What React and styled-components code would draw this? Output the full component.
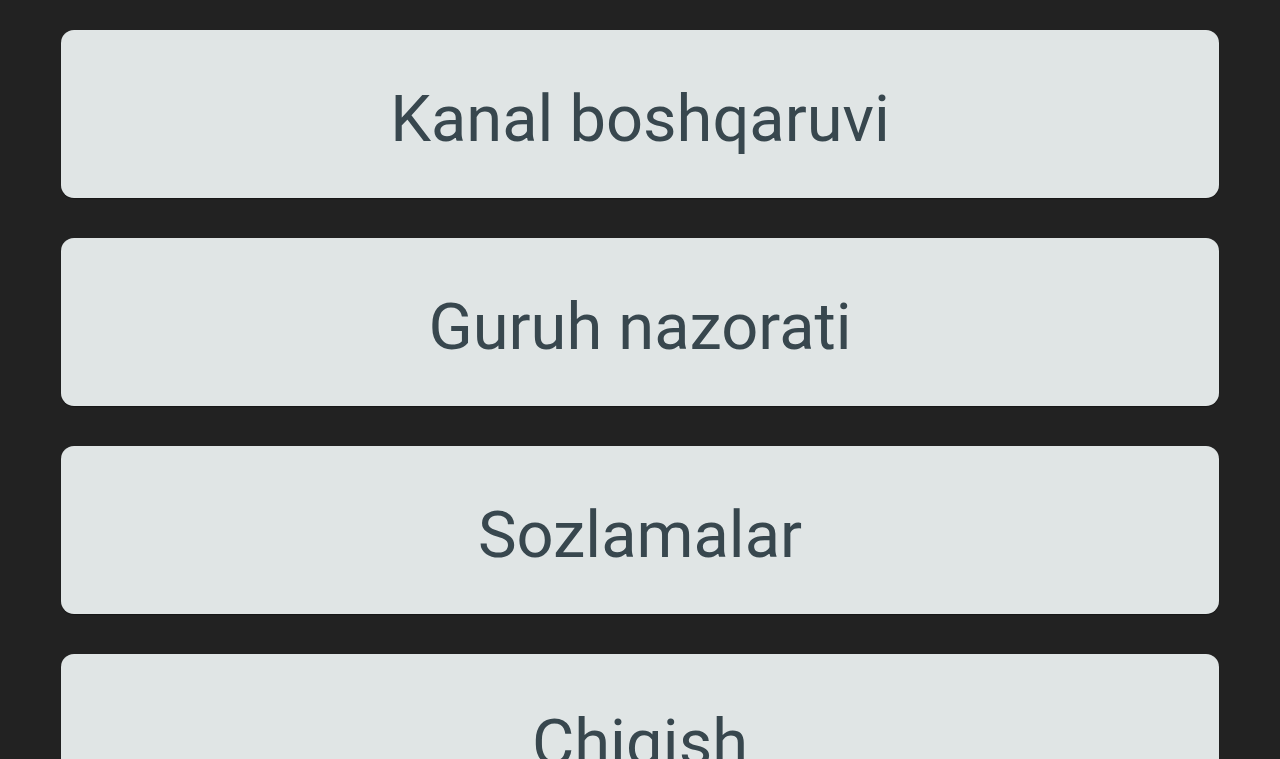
import React from "react";
import styled, { createGlobalStyle } from "styled-components";

const GlobalStyle = createGlobalStyle`
  html, body {
    margin: 0;
    padding: 0;
    background: #222222;
    overflow: hidden;
  }
`;

const Screen = styled.div`
  height: 759px;
  overflow: hidden;
  background: #222222;
  padding: 30px 61px 0;
  box-sizing: border-box;
  display: flex;
  flex-direction: column;
  gap: 40px;
`;

const MenuButton = styled.button`
  flex: 0 0 168px;
  width: 100%;
  border: none;
  border-radius: 13px;
  background: #e0e5e5;
  box-shadow: 0 1px 1px rgba(0, 0, 0, 0.35);
  color: #38474e;
  font-family: Roboto, "Noto Sans", sans-serif;
  font-size: 65px;
  font-weight: 400;
  display: flex;
  align-items: center;
  justify-content: center;
  padding: 10px 0 0;
  cursor: pointer;
`;

const items = ["Kanal boshqaruvi", "Guruh nazorati", "Sozlamalar", "Chiqish"];

const App = () => {
  return (
    <>
      <GlobalStyle />
      <Screen>
        {items.map((label) => (
          <MenuButton key={label}>{label}</MenuButton>
        ))}
      </Screen>
    </>
  );
};

export default App;
